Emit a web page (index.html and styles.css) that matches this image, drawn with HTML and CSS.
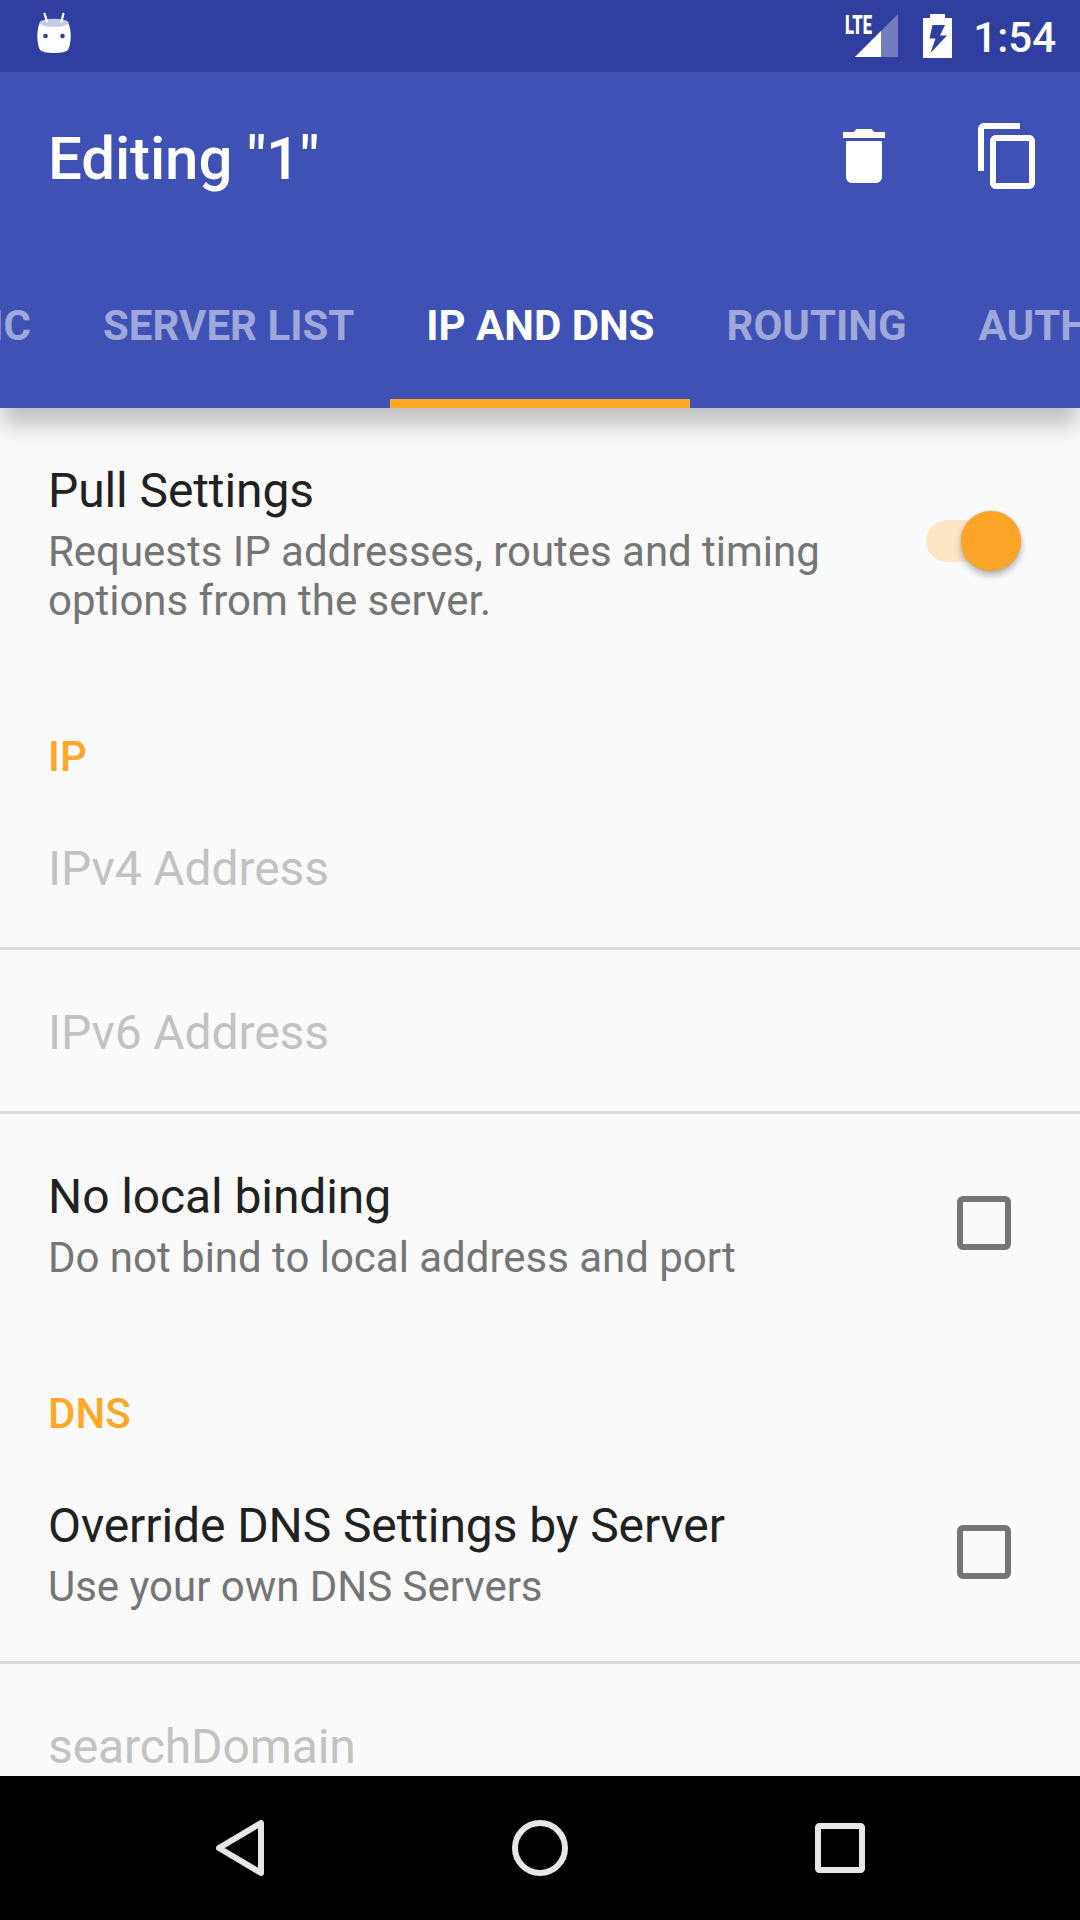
FILE: index.html
```html
<!DOCTYPE html>
<html lang="en">
<head>
<meta charset="utf-8">
<title>Editing "1"</title>
<link rel="stylesheet" href="styles.css">
</head>
<body>
<div class="screen">
  <header class="header">
    <div class="status-bar">
      <svg class="status-head" width="38" height="44" viewBox="0 0 38 44">
        <path d="M5 10.500C1.500 17 1.500 30 4.500 37C6 40 12 41 19 41S32 40 33.500 37C36.500 30 36.500 17 33 10.500Z" fill="#fff"/>
        <ellipse cx="19" cy="10.800" rx="14.500" ry="4" fill="#c7c9e4"/>
        <path d="M9.600 1.800L12 9.500M28.400 1.800L26.500 9.500" stroke="#fff" stroke-width="2.200" stroke-linecap="round"/>
        <circle cx="10.500" cy="24" r="2.300" fill="#303f9f"/>
        <circle cx="27.500" cy="24" r="2.300" fill="#303f9f"/>
      </svg>
      <div class="status-right">
        <svg class="signal" width="54" height="44" viewBox="0 0 54 44">
          <path d="M10 43L53 0V43Z" fill="#fff" fill-opacity=".32"/>
          <path d="M0 0H28V21H0Z" fill="#303f9f"/>
          <path d="M10 43L36 17V43Z" fill="#fff"/>
          <text class="lte" x="0" y="19.500" textLength="27" lengthAdjust="spacingAndGlyphs">LTE</text>
        </svg>
        <svg class="battery" width="29" height="44" viewBox="0 0 29 44">
          <path fill="#fff" fill-rule="evenodd" d="M7 0H22V4H29V44H0V4H7ZM9.500 11L6.500 24.500H12.500L7.500 39L24 21.500H17L22 11Z"/>
        </svg>
        <span class="clock">1:54</span>
      </div>
    </div>
    <div class="toolbar">
      <h1 class="title">Editing "1"</h1>
      <div class="actions">
        <svg width="72" height="72" viewBox="0 0 24 24"><path fill="#fff" d="M6 19c0 1.100.9 2 2 2h8c1.100 0 2-.9 2-2V7H6v12zM19 4h-3.500l-1-1h-5l-1 1H5v2h14V4z"/></svg>
        <svg width="72" height="72" viewBox="0 0 24 24"><path fill="#fff" d="M16 1H4c-1.100 0-2 .9-2 2v14h2V3h12V1zm3 4H8c-1.100 0-2 .9-2 2v14c0 1.100.9 2 2 2h11c1.100 0 2-.9 2-2V7c0-1.100-.9-2-2-2zm0 16H8V7h11v14z"/></svg>
      </div>
    </div>
    <nav class="tabs">
      <span class="tab tab-before">Basic</span>
      <span class="tab">Server List</span>
      <span class="tab tab-active">IP and DNS</span>
      <span class="tab">Routing</span>
      <span class="tab">Auth</span>
    </nav>
  </header>
  <main class="content">
    <section class="row">
      <div class="row-text">
        <div class="row-title">Pull Settings</div>
        <div class="row-summary">Requests IP addresses, routes and timing options from the server.</div>
      </div>
      <span class="switch"><span class="thumb"></span></span>
    </section>
    <h2 class="category">IP</h2>
    <section class="row disabled divided"><div class="row-title">IPv4 Address</div></section>
    <section class="row disabled divided"><div class="row-title">IPv6 Address</div></section>
    <section class="row">
      <div class="row-text">
        <div class="row-title">No local binding</div>
        <div class="row-summary">Do not bind to local address and port</div>
      </div>
      <span class="checkbox"></span>
    </section>
    <h2 class="category">DNS</h2>
    <section class="row divided">
      <div class="row-text">
        <div class="row-title">Override DNS Settings by Server</div>
        <div class="row-summary">Use your own DNS Servers</div>
      </div>
      <span class="checkbox"></span>
    </section>
    <section class="row disabled"><div class="row-title">searchDomain</div></section>
  </main>
  <footer class="nav-bar">
    <svg width="60" height="60" viewBox="0 0 60 60"><path d="M51 5V55L9 30Z"/></svg>
    <svg width="60" height="60" viewBox="0 0 60 60"><circle cx="30" cy="30" r="25"/></svg>
    <svg width="60" height="60" viewBox="0 0 60 60"><rect x="8" y="8" width="44" height="44" rx="1.500"/></svg>
  </footer>
</div>
</body>
</html>
```

FILE: styles.css
```css
* { box-sizing: border-box; }
body { margin: 0; font-family: Roboto, sans-serif; }
svg { display: block; flex: none; }
h1, h2 { margin: 0; }

.screen {
  width: 1080px;
  height: 1920px;
  display: flex;
  flex-direction: column;
  overflow: hidden;
  background: #fafafa;
}

.header {
  position: relative;
  flex: none;
  height: 408px;
  background: #3f51b5;
  color: #fff;
}
.header::after {
  content: "";
  position: absolute;
  top: 100%;
  left: 0;
  right: 0;
  height: 42px;
  background: linear-gradient(rgba(0,0,0,.215), rgba(0,0,0,.17) 10px, rgba(0,0,0,.075) 22px, rgba(0,0,0,.02) 32px, transparent);
  mask-image: linear-gradient(90deg, rgba(0,0,0,.45), #000 18px, #000 calc(100% - 18px), rgba(0,0,0,.45));
}

.status-bar {
  height: 72px;
  padding: 0 24px 0 35px;
  display: flex;
  justify-content: space-between;
  align-items: flex-start;
  background: #303f9f;
}
.status-head { margin-top: 12px; }
.status-right { display: flex; align-items: flex-start; padding-top: 14px; }
.signal { overflow: visible; }
.lte { font: 900 26px Roboto, sans-serif; fill: #fff; }
.battery { margin-left: 24px; }
.clock { margin: -1px 0 0 21px; font-size: 42px; font-weight: 500; line-height: 49px; }

.toolbar {
  height: 168px;
  padding: 0 36px 0 48px;
  display: flex;
  align-items: center;
  justify-content: space-between;
}
.title { font-size: 60px; font-weight: 500; line-height: 70px; letter-spacing: -.12px; padding-top: 5px; }
.actions { display: flex; gap: 72px; }

.tabs { height: 168px; display: flex; overflow: hidden; }
.tab {
  flex: none;
  height: 168px;
  padding: 0 36px;
  font-size: 42px;
  font-weight: 700;
  line-height: 172px;
  text-transform: uppercase;
  color: #9fa8da;
}
/* The tab strip is scrolled, leaving 67px of the first tab in view. */
.tab-before { width: 67px; padding-left: 0; display: flex; justify-content: flex-end; }
.tab-active { color: #fff; box-shadow: inset 0 -9px #ffa726; }

.content { flex: 1; min-height: 0; overflow: hidden; }
.row {
  display: flex;
  align-items: center;
  justify-content: space-between;
  padding: 55px 48px 50px;
}
.row-text { width: 800px; }
.row-title { font-size: 48px; line-height: 56px; letter-spacing: -.1px; color: #212121; }
.row-summary { margin-top: 8px; font-size: 42px; line-height: 49px; letter-spacing: -.02px; color: #757575; }
.disabled .row-title { color: #c2c2c2; }
.disabled { height: 161px; }
.divided { border-bottom: 3px solid #dcdcdc; }
.divided.disabled { height: 164px; }

.category {
  height: 111px;
  padding: 57px 48px 0;
  font-size: 42px;
  font-weight: 500;
  line-height: 49px;
  color: #ffa726;
}

.checkbox { width: 54px; height: 54px; margin: 0 21px 5px 0; border: 6px solid #757575; border-radius: 6px; }
.switch {
  width: 86px;
  height: 42px;
  margin: 0 20px 6px 0;
  display: flex;
  align-items: center;
  justify-content: flex-end;
  border-radius: 21px;
  background: #fde6c5;
}
.thumb {
  flex: none;
  width: 60px;
  height: 60px;
  margin-right: -9px;
  border-radius: 50%;
  background: #faa527;
  box-shadow: 0 4px 7px rgba(0,0,0,.3), 0 0 2px rgba(0,0,0,.15);
}

.nav-bar {
  flex: none;
  height: 144px;
  display: flex;
  align-items: center;
  justify-content: center;
  gap: 240px;
  background: #000;
}
.nav-bar svg { fill: none; stroke: #e6e6e6; stroke-width: 6; stroke-linejoin: round; }
```
